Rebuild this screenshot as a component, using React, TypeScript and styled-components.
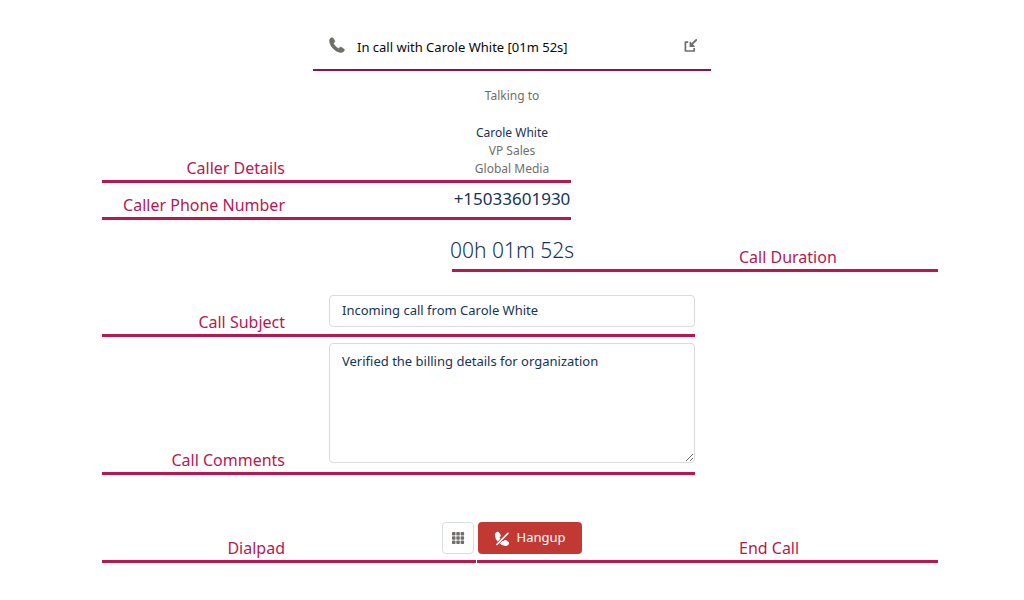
import React from "react";
import styled, { createGlobalStyle } from "styled-components";

const GlobalStyle = createGlobalStyle`
  *, *::before, *::after { box-sizing: border-box; }
  body {
    margin: 0;
    background: #ffffff;
    color: #16325c;
    font-family: "Noto Sans", "Open Sans", sans-serif;
    font-size: 13px;
  }
`;

const Page = styled.main`
  padding: 26px 0 24px;
`;

const CallHeader = styled.header`
  display: flex;
  align-items: center;
  width: 398px;
  max-width: 100%;
  height: 45px;
  margin: 0 auto;
  padding: 0 12px 6px 16px;
  border-bottom: 2px solid #960f43;
  color: #080707;
`;

const CallTitle = styled.h1`
  flex: 1;
  margin: 0 0 0 12px;
  padding-top: 4px;
  font-size: 13px;
  font-weight: 400;
  line-height: 18px;
`;

const IconButton = styled.button`
  display: flex;
  padding: 2px;
  border: 0;
  background: none;
  color: #706e6b;
`;

const Row = styled.section<{ $height: number }>`
  display: grid;
  grid-template-columns:
    [outer-left] 1fr [gutter] 44px [field] 123px [timer] 24px [split] 95px
    [number] 124px [field-right] 44px [note] 1fr [outer-right];
  grid-template-rows: 1fr 3px;
  min-height: ${(p) => p.$height}px;
`;

const Label = styled.label<{ $side?: "left" | "right" }>`
  grid-row: 1;
  grid-column: ${(p) => (p.$side === "right" ? "note / outer-right" : "outer-left / gutter")};
  align-self: end;
  text-align: ${(p) => (p.$side === "right" ? "left" : "right")};
  color: #ba1650;
  font-size: 16px;
  line-height: 24px;
`;

const Rule = styled.div<{ $from?: string; $to: string }>`
  grid-row: 2;
  grid-column: ${(p) => p.$from ?? "outer-left"} / ${(p) => p.$to};
  margin-left: ${(p) => (p.$from ? 0 : 102)}px;
  margin-right: ${(p) => (p.$to === "outer-right" ? 86 : 0)}px;
  background: #ba1650;

  & + & {
    border-left: 1px solid #ffffff;
  }
`;

const Content = styled.div<{ $top: number }>`
  grid-row: 1;
  grid-column: field / field-right;
  padding-top: ${(p) => p.$top}px;
  text-align: center;
`;

const Detail = styled.p<{ $strong?: boolean }>`
  margin: 0;
  color: ${(p) => (p.$strong ? "#16325c" : "#706e6b")};
  font-size: 12px;
  line-height: 18px;
`;

const Talking = styled(Detail)`
  margin-bottom: 19px;
`;

const Phone = styled.output`
  display: block;
  font-size: 17px;
  line-height: 24px;
`;

const Timer = styled.output`
  display: block;
  font-size: 21px;
  font-weight: 300;
  line-height: 28px;
`;

const Subject = styled.input`
  display: block;
  width: 100%;
  height: 32px;
  padding: 0 12px 2px;
  border: 1px solid #dddbda;
  border-radius: 4px;
  background: #ffffff;
  color: #16325c;
  font: inherit;
`;

const Comments = styled.textarea`
  display: block;
  width: 100%;
  height: 120px;
  padding: 8px 12px;
  border: 1px solid #dddbda;
  border-radius: 4px;
  background: #ffffff;
  color: #16325c;
  font: inherit;
  line-height: 18px;
  resize: vertical;
`;

const Actions = styled(Content)`
  display: flex;
  justify-content: center;
  align-items: flex-start;
  gap: 4px;
`;

const DialpadButton = styled.button`
  display: grid;
  place-items: center;
  width: 32px;
  height: 32px;
  padding: 0;
  border: 1px solid #d8dde6;
  border-radius: 4px;
  background: #ffffff;
  color: #706e6b;
`;

const HangupButton = styled.button`
  display: flex;
  align-items: center;
  gap: 8px;
  height: 32px;
  padding: 0 17px;
  border: 0;
  border-radius: 4px;
  background: #c23934;
  color: #ffffff;
  font: inherit;
  line-height: 18px;
`;

const ButtonText = styled.span`
  padding-bottom: 2px;
`;

const HANDSET =
  "M18.4 11.6L13 4C11.7 2 9 1.4 7 2.8C4 5 2 8 2 12C2 30 22 50 40 50C44 50 47 48 49.2 45C50.6 43 50 40.3 48 39L40.4 33.6C38.7 32.6 36.6 32.8 35.2 34.2L32.6 36.8C31.8 37.6 30.6 37.7 29.7 37.1C24 34 18 28 14.9 22.3C14.3 21.4 14.4 20.2 15.2 19.4L17.8 16.8C19.2 15.4 19.4 13.3 18.4 11.6Z";

const CallIcon = () => (
  <svg width="16" height="16" viewBox="0 0 52 52" fill="#706e6b" stroke="#706e6b" strokeWidth="2" aria-hidden="true">
    <path d={HANDSET} />
  </svg>
);

const PopInIcon = () => (
  <svg width="14" height="14" viewBox="0 0 14 14" fill="none" stroke="currentColor" aria-hidden="true">
    <path d="M5.2 4.2H2.4V13H11.2V10" strokeWidth="1.7" strokeLinejoin="round" />
    <path d="M13.2 2L8 7.2" strokeWidth="1.8" strokeLinecap="round" />
    <path d="M7.2 4.4V8.4H11.2Z" fill="currentColor" strokeWidth="1.2" strokeLinejoin="round" />
  </svg>
);

const DialpadIcon = () => (
  <svg width="14" height="14" viewBox="0 0 14 14" fill="currentColor" aria-hidden="true">
    {[1, 5.3, 9.6].map((y) =>
      [1, 5.3, 9.6].map((x) => <rect key={`${x}-${y}`} x={x} y={y} width="3.5" height="3.5" rx="0.8" />),
    )}
  </svg>
);

const EndCallIcon = () => (
  <svg width="14" height="14" viewBox="0 -3 52 52" fill="#ffffff" overflow="visible" aria-hidden="true">
    <path d={HANDSET} stroke="#ffffff" strokeWidth="5" />
    <path d="M1 53L52 2" stroke="#c23934" strokeWidth="11" />
    <path d="M7 47L48 6" stroke="#ffffff" strokeWidth="6" strokeLinecap="round" />
  </svg>
);

export default function App() {
  return (
    <>
      <GlobalStyle />
      <Page>
        <CallHeader>
          <CallIcon />
          <CallTitle>In call with Carole White [01m 52s]</CallTitle>
          <IconButton type="button" aria-label="Pop in">
            <PopInIcon />
          </IconButton>
        </CallHeader>

        <Row $height={112}>
          <Label as="span">Caller Details</Label>
          <Content $top={16}>
            <Talking>Talking to</Talking>
            <Detail $strong>Carole White</Detail>
            <Detail>VP Sales</Detail>
            <Detail>Global Media</Detail>
          </Content>
          <Rule $to="number" />
        </Row>

        <Row $height={37}>
          <Label htmlFor="phone">Caller Phone Number</Label>
          <Content $top={4}>
            <Phone id="phone">+15033601930</Phone>
          </Content>
          <Rule $to="number" />
        </Row>

        <Row $height={52}>
          <Content $top={16}>
            <Timer id="duration">00h 01m 52s</Timer>
          </Content>
          <Label htmlFor="duration" $side="right">Call Duration</Label>
          <Rule $from="timer" $to="outer-right" />
        </Row>

        <Row $height={65}>
          <Label htmlFor="subject">Call Subject</Label>
          <Content $top={23}>
            <Subject id="subject" type="text" defaultValue="Incoming call from Carole White" />
          </Content>
          <Rule $to="field-right" />
        </Row>

        <Row $height={138}>
          <Label htmlFor="comments">Call Comments</Label>
          <Content $top={6}>
            <Comments id="comments" defaultValue="Verified the billing details for organization" />
          </Content>
          <Rule $to="field-right" />
        </Row>

        <Row $height={88}>
          <Label htmlFor="dialpad">Dialpad</Label>
          <Actions $top={47}>
            <DialpadButton id="dialpad" type="button">
              <DialpadIcon />
            </DialpadButton>
            <HangupButton id="hangup" type="button">
              <EndCallIcon />
              <ButtonText>Hangup</ButtonText>
            </HangupButton>
          </Actions>
          <Label htmlFor="hangup" $side="right">End Call</Label>
          <Rule $to="split" />
          <Rule $from="split" $to="outer-right" />
        </Row>
      </Page>
    </>
  );
}
